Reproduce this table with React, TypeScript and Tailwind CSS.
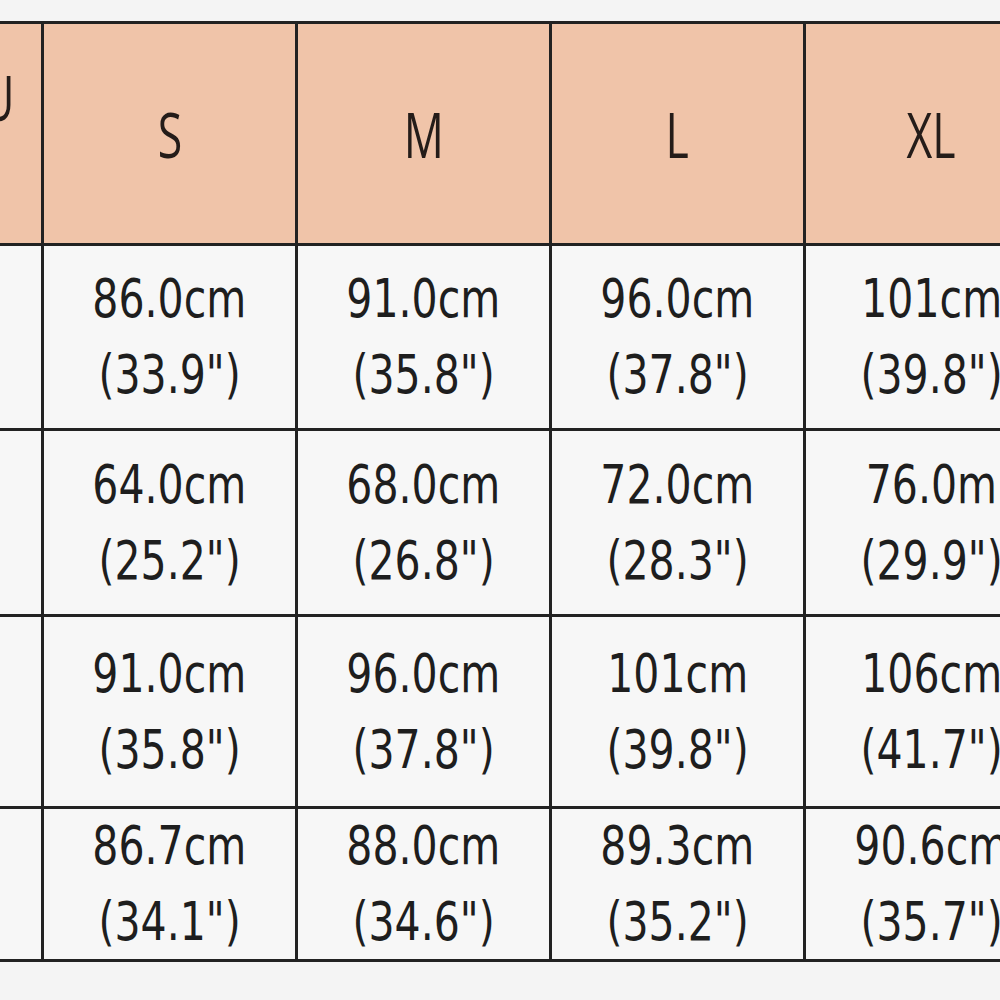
const sizes = ['S', 'M', 'L', 'XL'];

const rows: [string, string][][] = [
  [['86.0cm', '(33.9")'], ['91.0cm', '(35.8")'], ['96.0cm', '(37.8")'], ['101cm', '(39.8")']],
  [['64.0cm', '(25.2")'], ['68.0cm', '(26.8")'], ['72.0cm', '(28.3")'], ['76.0m', '(29.9")']],
  [['91.0cm', '(35.8")'], ['96.0cm', '(37.8")'], ['101cm', '(39.8")'], ['106cm', '(41.7")']],
  [['86.7cm', '(34.1")'], ['88.0cm', '(34.6")'], ['89.3cm', '(35.2")'], ['90.6cm', '(35.7")']],
];

function HeaderCell({ label }: { label: string }) {
  return (
    <div className="flex items-center justify-center bg-[#f0c4a9] text-[#241c19]">
      <span className="inline-block scale-x-[0.72] text-[62px] leading-none font-medium font-['Open_Sans',sans-serif]">
        {label}
      </span>
    </div>
  );
}

function ValueCell({ cm, inch }: { cm: string; inch: string }) {
  return (
    <div className="flex flex-col items-center justify-center bg-[#f7f7f7] text-[#1e1e1e] whitespace-nowrap">
      <span className="inline-block scale-x-[0.76] text-[54px] leading-[76px] font-['DejaVu_Sans',sans-serif]">
        {cm}
      </span>
      <span className="inline-block scale-x-[0.76] text-[54px] leading-[76px] font-['DejaVu_Sans',sans-serif]">
        {inch}
      </span>
    </div>
  );
}

export default function App() {
  return (
    <div className="w-[1000px] h-[1000px] overflow-hidden bg-[#f4f4f4] pt-[21px]">
      <div className="grid w-max grid-cols-[41px_251px_251px_251px_251px] grid-rows-[219px_182px_183px_189px_150px] gap-[3px] bg-[#222222] border-y-[3px] border-[#222222]">
        {/* header row */}
        <div className="flex items-start justify-end overflow-hidden bg-[#f0c4a9] pt-[42px] pr-[26px] text-[#241c19]">
          <span className="inline-block origin-right scale-x-[0.72] text-[62px] leading-none font-medium font-['Open_Sans',sans-serif]">
            EU
          </span>
        </div>
        {sizes.map((s) => (
          <HeaderCell key={s} label={s} />
        ))}

        {/* measurement rows */}
        {rows.map((row, i) => (
          <div key={i} className="contents">
            <div className="bg-[#f7f7f7]" />
            {row.map(([cm, inch], j) => (
              <ValueCell key={j} cm={cm} inch={inch} />
            ))}
          </div>
        ))}
      </div>
    </div>
  );
}
